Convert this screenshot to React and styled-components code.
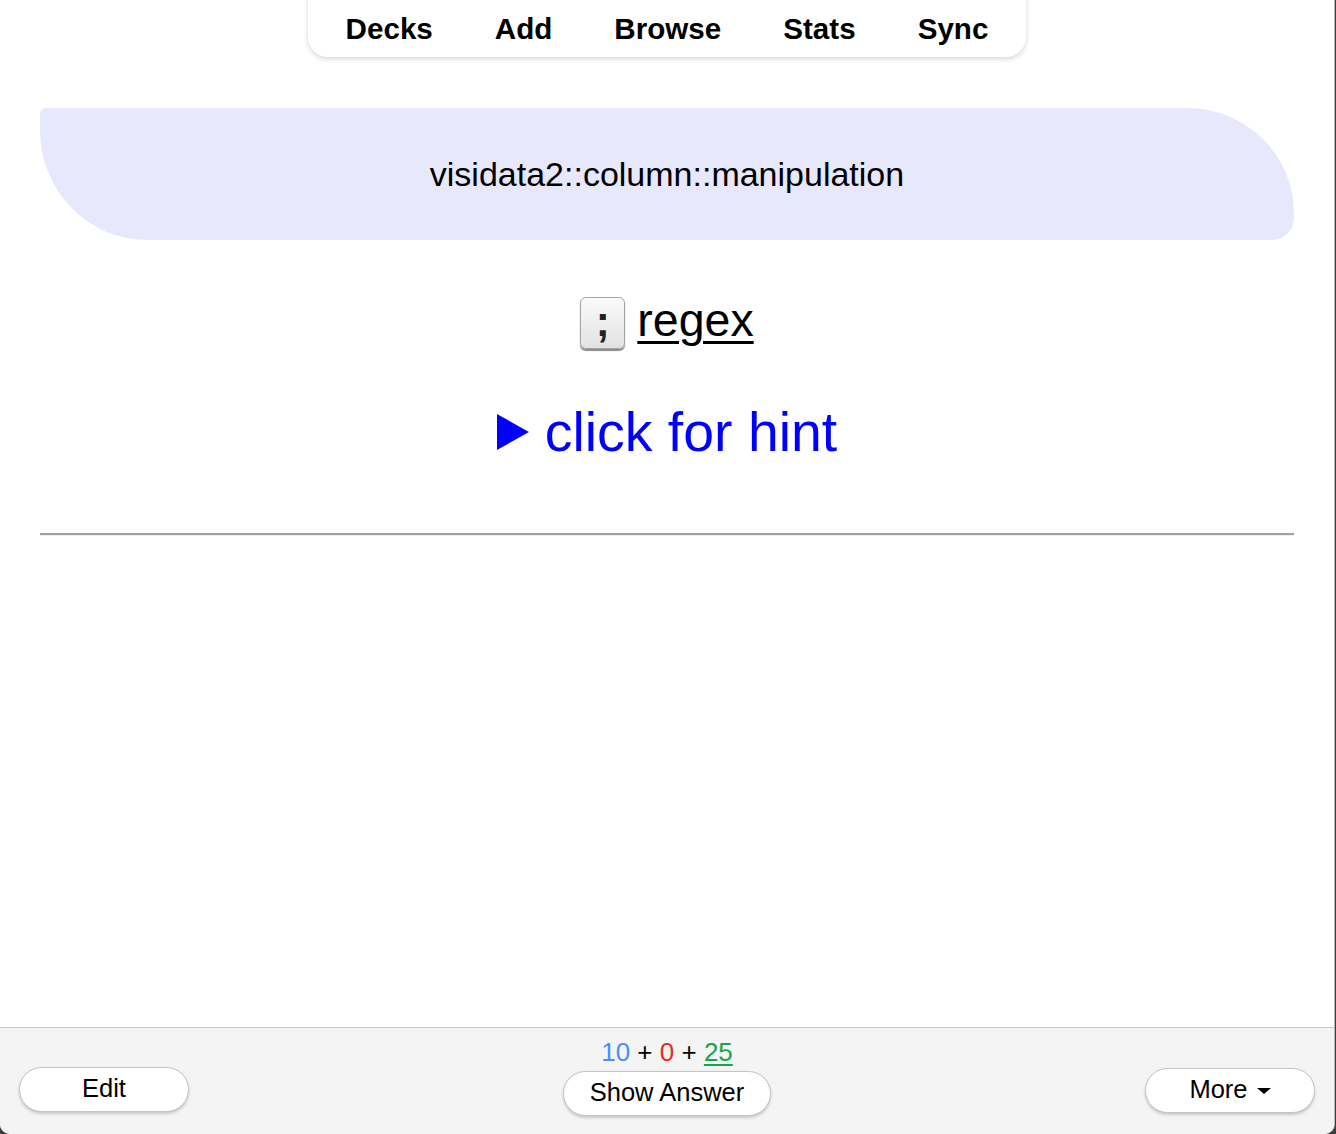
import React from "react";
import styled, { createGlobalStyle } from "styled-components";

const GlobalStyle = createGlobalStyle`
  html, body {
    margin: 0;
    padding: 0;
    background: #3c3c3c;
  }
  body {
    font-family: "Liberation Sans", Arial, Helvetica, sans-serif;
    color: #000;
  }
`;

const Window = styled.div`
  width: 1334px;
  height: 1134px;
  background: #fff;
  border-right: 1px solid #bdbdbd;
  border-radius: 0 0 10px 10px;
  overflow: hidden;
  display: flex;
  flex-direction: column;
`;

const Main = styled.main`
  flex: 1;
  display: flex;
  flex-direction: column;
`;

const NavWrap = styled.div`
  display: flex;
  justify-content: center;
`;

const NavPill = styled.nav`
  margin-top: -20px;
  padding: 20px 7px 0;
  height: 57px;
  display: flex;
  align-items: center;
  background: #fff;
  border-radius: 20px;
  box-shadow: 0 2px 5px rgba(0, 0, 0, 0.16);
`;

const NavItem = styled.a`
  padding: 0 31px;
  font-size: 29.6px;
  font-weight: bold;
  color: #000;
  text-decoration: none;
  cursor: pointer;
`;

const DeckHeader = styled.div`
  margin: 51px 40px 0;
  height: 132px;
  background: #e8e8fd;
  border-radius: 6px 107px 22px 107px / 6px 105px 22px 110px;
  display: flex;
  align-items: center;
  justify-content: center;
  font-size: 34px;
  box-sizing: border-box;
`;

const FrontRow = styled.div`
  margin-top: 57px;
  height: 52px;
  display: flex;
  justify-content: center;
  align-items: center;
  gap: 12px;
`;

const Kbd = styled.kbd`
  width: 45px;
  height: 52px;
  box-sizing: border-box;
  display: flex;
  align-items: center;
  justify-content: center;
  border: 1px solid #a3a3a3;
  border-radius: 6px;
  background: linear-gradient(#fbfbfb, #e2e2e2);
  box-shadow: 0 2px 1px #8a8a8a, inset 0 1px 0 #fff;
  font-family: "Liberation Sans", Arial, sans-serif;
  font-size: 42px;
  font-weight: bold;
  color: #222;
  padding-bottom: 2px;
`;

const Term = styled.span`
  font-size: 46.5px;
  text-decoration: underline;
  text-decoration-thickness: 3px;
  text-underline-offset: 5px;
  margin-top: -6px;
`;

const Hint = styled.div`
  margin-top: 51px;
  height: 64px;
  display: flex;
  justify-content: center;
  align-items: center;
  gap: 16px;
  color: #0000ff;
  font-size: 55.4px;
  cursor: pointer;
`;

const Rule = styled.hr`
  margin: 69px 40px 0;
  border: none;
  border-top: 2px solid #a0a0a0;
  border-bottom: 1px solid #efefef;
  height: 0;
`;

const BottomBar = styled.footer`
  height: 107px;
  border-top: 1px solid #c9c9c9;
  background: #f4f4f4;
  display: grid;
  grid-template-columns: 1fr auto 1fr;
  align-items: start;
  padding: 0 19px;
  box-sizing: border-box;
`;

const Side = styled.div`
  display: flex;
  justify-content: ${(p) => (p.$end ? "flex-end" : "flex-start")};
  padding-top: ${(p) => p.$top}px;
`;

const Center = styled.div`
  display: flex;
  flex-direction: column;
  align-items: center;
  padding-top: 9px;
`;

const Counts = styled.div`
  font-size: 26px;
  line-height: 30px;
`;

const Count = styled.span`
  color: ${(p) => p.$color};
  text-decoration: ${(p) => (p.$active ? "underline" : "none")};
  text-underline-offset: 3px;
`;

const PillButton = styled.button`
  width: ${(p) => p.$w}px;
  height: 45px;
  margin-top: ${(p) => p.$mt || 0}px;
  border: 1.5px solid #c3c3c3;
  border-radius: 23px;
  background: #fff;
  box-shadow: 0 2px 3px rgba(0, 0, 0, 0.18);
  font-family: "Liberation Sans", Arial, sans-serif;
  font-size: 25.5px;
  color: #000;
  display: flex;
  align-items: center;
  justify-content: center;
  gap: 9px;
  cursor: pointer;
  padding: 0 0 2px;
`;

const Caret = styled.span`
  width: 0;
  height: 0;
  border-left: 7px solid transparent;
  border-right: 7px solid transparent;
  border-top: 6px solid #000;
  margin-top: 3px;
`;

export default function App() {
  return (
    <>
      <GlobalStyle />
      <Window>
        <Main>
          <NavWrap>
            <NavPill>
              <NavItem>Decks</NavItem>
              <NavItem>Add</NavItem>
              <NavItem>Browse</NavItem>
              <NavItem>Stats</NavItem>
              <NavItem>Sync</NavItem>
            </NavPill>
          </NavWrap>

          <DeckHeader>visidata2::column::manipulation</DeckHeader>

          <FrontRow>
            <Kbd>;</Kbd>
            <Term>regex</Term>
          </FrontRow>

          <Hint>
            <svg width="32" height="36" viewBox="0 0 32 36">
              <polygon points="0,0 32,18 0,36" fill="#0000ff" />
            </svg>
            <span>click for hint</span>
          </Hint>

          <Rule />
        </Main>

        <BottomBar>
          <Side $top={39}>
            <PillButton $w={170}>Edit</PillButton>
          </Side>
          <Center>
            <Counts>
              <Count $color="#4a8ff5">10</Count> + <Count $color="#e52b2b">0</Count> +{" "}
              <Count $color="#1aa34a" $active>
                25
              </Count>
            </Counts>
            <PillButton $w={208} $mt={4}>
              Show Answer
            </PillButton>
          </Center>
          <Side $end $top={40}>
            <PillButton $w={170}>
              More <Caret />
            </PillButton>
          </Side>
        </BottomBar>
      </Window>
    </>
  );
}
